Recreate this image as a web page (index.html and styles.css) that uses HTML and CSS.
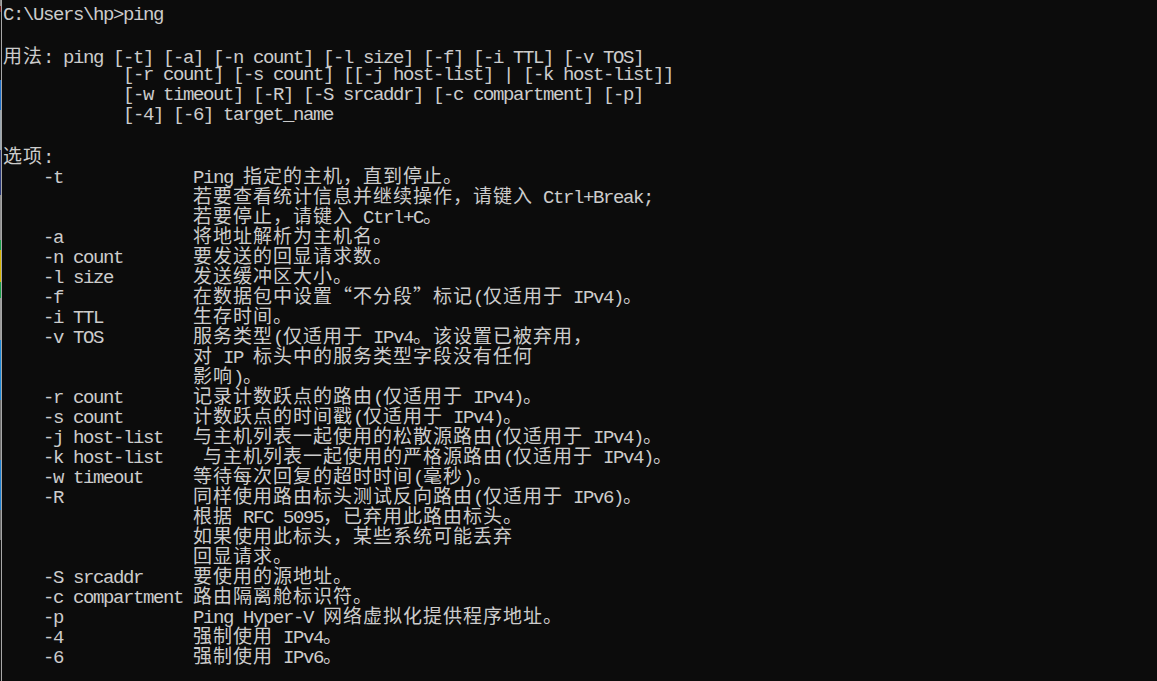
FILE: index.html
```html
<!DOCTYPE html>
<html lang="zh-CN">
<head>
<meta charset="utf-8">
<title>命令提示符</title>
<link rel="stylesheet" href="styles.css">
</head>
<body>
<div class="window">
  <div class="edge"></div>
  <div class="console">
    <div class="ln">C:\Users\hp&gt;ping</div>
    <div class="ln"></div>
    <div class="ln"><span class="w">用法</span>: ping [-t] [-a] [-n count] [-l size] [-f] [-i TTL] [-v TOS]</div>
    <div class="ln">            [-r count] [-s count] [[-j host-list] | [-k host-list]]</div>
    <div class="ln">            [-w timeout] [-R] [-S srcaddr] [-c compartment] [-p]</div>
    <div class="ln">            [-4] [-6] target_name</div>
    <div class="ln"></div>
    <div class="ln"><span class="w">选项</span>:</div>
    <div class="ln">    -t             Ping <span class="w">指定的主机，直到停止。</span></div>
    <div class="ln">                   <span class="w">若要查看统计信息并继续操作，请键入</span> Ctrl+Break;</div>
    <div class="ln">                   <span class="w">若要停止，请键入</span> Ctrl+C<span class="w">。</span></div>
    <div class="ln">    -a             <span class="w">将地址解析为主机名。</span></div>
    <div class="ln">    -n count       <span class="w">要发送的回显请求数。</span></div>
    <div class="ln">    -l size        <span class="w">发送缓冲区大小。</span></div>
    <div class="ln">    -f             <span class="w">在数据包中设置“不分段”标记</span>(<span class="w">仅适用于</span> IPv4)<span class="w">。</span></div>
    <div class="ln">    -i TTL         <span class="w">生存时间。</span></div>
    <div class="ln">    -v TOS         <span class="w">服务类型</span>(<span class="w">仅适用于</span> IPv4<span class="w">。该设置已被弃用，</span></div>
    <div class="ln">                   <span class="w">对</span> IP <span class="w">标头中的服务类型字段没有任何</span></div>
    <div class="ln">                   <span class="w">影响</span>)<span class="w">。</span></div>
    <div class="ln">    -r count       <span class="w">记录计数跃点的路由</span>(<span class="w">仅适用于</span> IPv4)<span class="w">。</span></div>
    <div class="ln">    -s count       <span class="w">计数跃点的时间戳</span>(<span class="w">仅适用于</span> IPv4)<span class="w">。</span></div>
    <div class="ln">    -j host-list   <span class="w">与主机列表一起使用的松散源路由</span>(<span class="w">仅适用于</span> IPv4)<span class="w">。</span></div>
    <div class="ln">    -k host-list    <span class="w">与主机列表一起使用的严格源路由</span>(<span class="w">仅适用于</span> IPv4)<span class="w">。</span></div>
    <div class="ln">    -w timeout     <span class="w">等待每次回复的超时时间</span>(<span class="w">毫秒</span>)<span class="w">。</span></div>
    <div class="ln">    -R             <span class="w">同样使用路由标头测试反向路由</span>(<span class="w">仅适用于</span> IPv6)<span class="w">。</span></div>
    <div class="ln">                   <span class="w">根据</span> RFC 5095<span class="w">，已弃用此路由标头。</span></div>
    <div class="ln">                   <span class="w">如果使用此标头，某些系统可能丢弃</span></div>
    <div class="ln">                   <span class="w">回显请求。</span></div>
    <div class="ln">    -S srcaddr     <span class="w">要使用的源地址。</span></div>
    <div class="ln">    -c compartment <span class="w">路由隔离舱标识符。</span></div>
    <div class="ln">    -p             Ping Hyper-V <span class="w">网络虚拟化提供程序地址。</span></div>
    <div class="ln">    -4             <span class="w">强制使用</span> IPv4<span class="w">。</span></div>
    <div class="ln">    -6             <span class="w">强制使用</span> IPv6<span class="w">。</span></div>
  </div>
</div>
</body>
</html>
```

FILE: styles.css
```css
html, body {
  margin: 0;
  padding: 0;
  height: 100%;
  background: #0c0c0c;
  overflow: hidden;
}

.window {
  display: flex;
  height: 681px;
  background: #0c0c0c;
}

.edge {
  width: 1px;
  flex: none;
  border-right: 1px solid #a8a8a8;
  background: linear-gradient(to bottom,
    #8a8a8a 0px, #8a8a8a 6px,
    #6a1e1e 6px, #6a1e1e 12px,
    #101010 12px, #101010 80px,
    #1f6fc8 80px, #1f6fc8 110px,
    #9aa6b0 110px, #9aa6b0 150px,
    #2b3a7a 150px, #2b3a7a 195px,
    #8e8e8e 195px, #8e8e8e 240px,
    #1aa04a 240px, #1aa04a 250px,
    #d6b400 250px, #d6b400 282px,
    #1aa04a 282px, #1aa04a 298px,
    #9a9a9a 298px, #9a9a9a 340px,
    #1e88d8 340px, #1e88d8 400px,
    #707070 400px, #707070 460px,
    #1e7fd0 460px, #1e7fd0 510px,
    #6a6a6a 510px, #6a6a6a 540px,
    #151515 540px, #151515 681px);
}

.console {
  flex: 1;
  padding: 5px 0 0 1px;
  color: #cccccc;
  font-family: "Liberation Mono", "Noto Sans CJK SC", monospace;
  font-size: 19px;
  letter-spacing: -1.4px;
}

.ln {
  height: 20px;
  line-height: 20px;
  white-space: pre;
}

.w {
  font-family: "Noto Sans CJK SC", sans-serif;
  font-size: 19px;
  letter-spacing: 1px;
}
```
